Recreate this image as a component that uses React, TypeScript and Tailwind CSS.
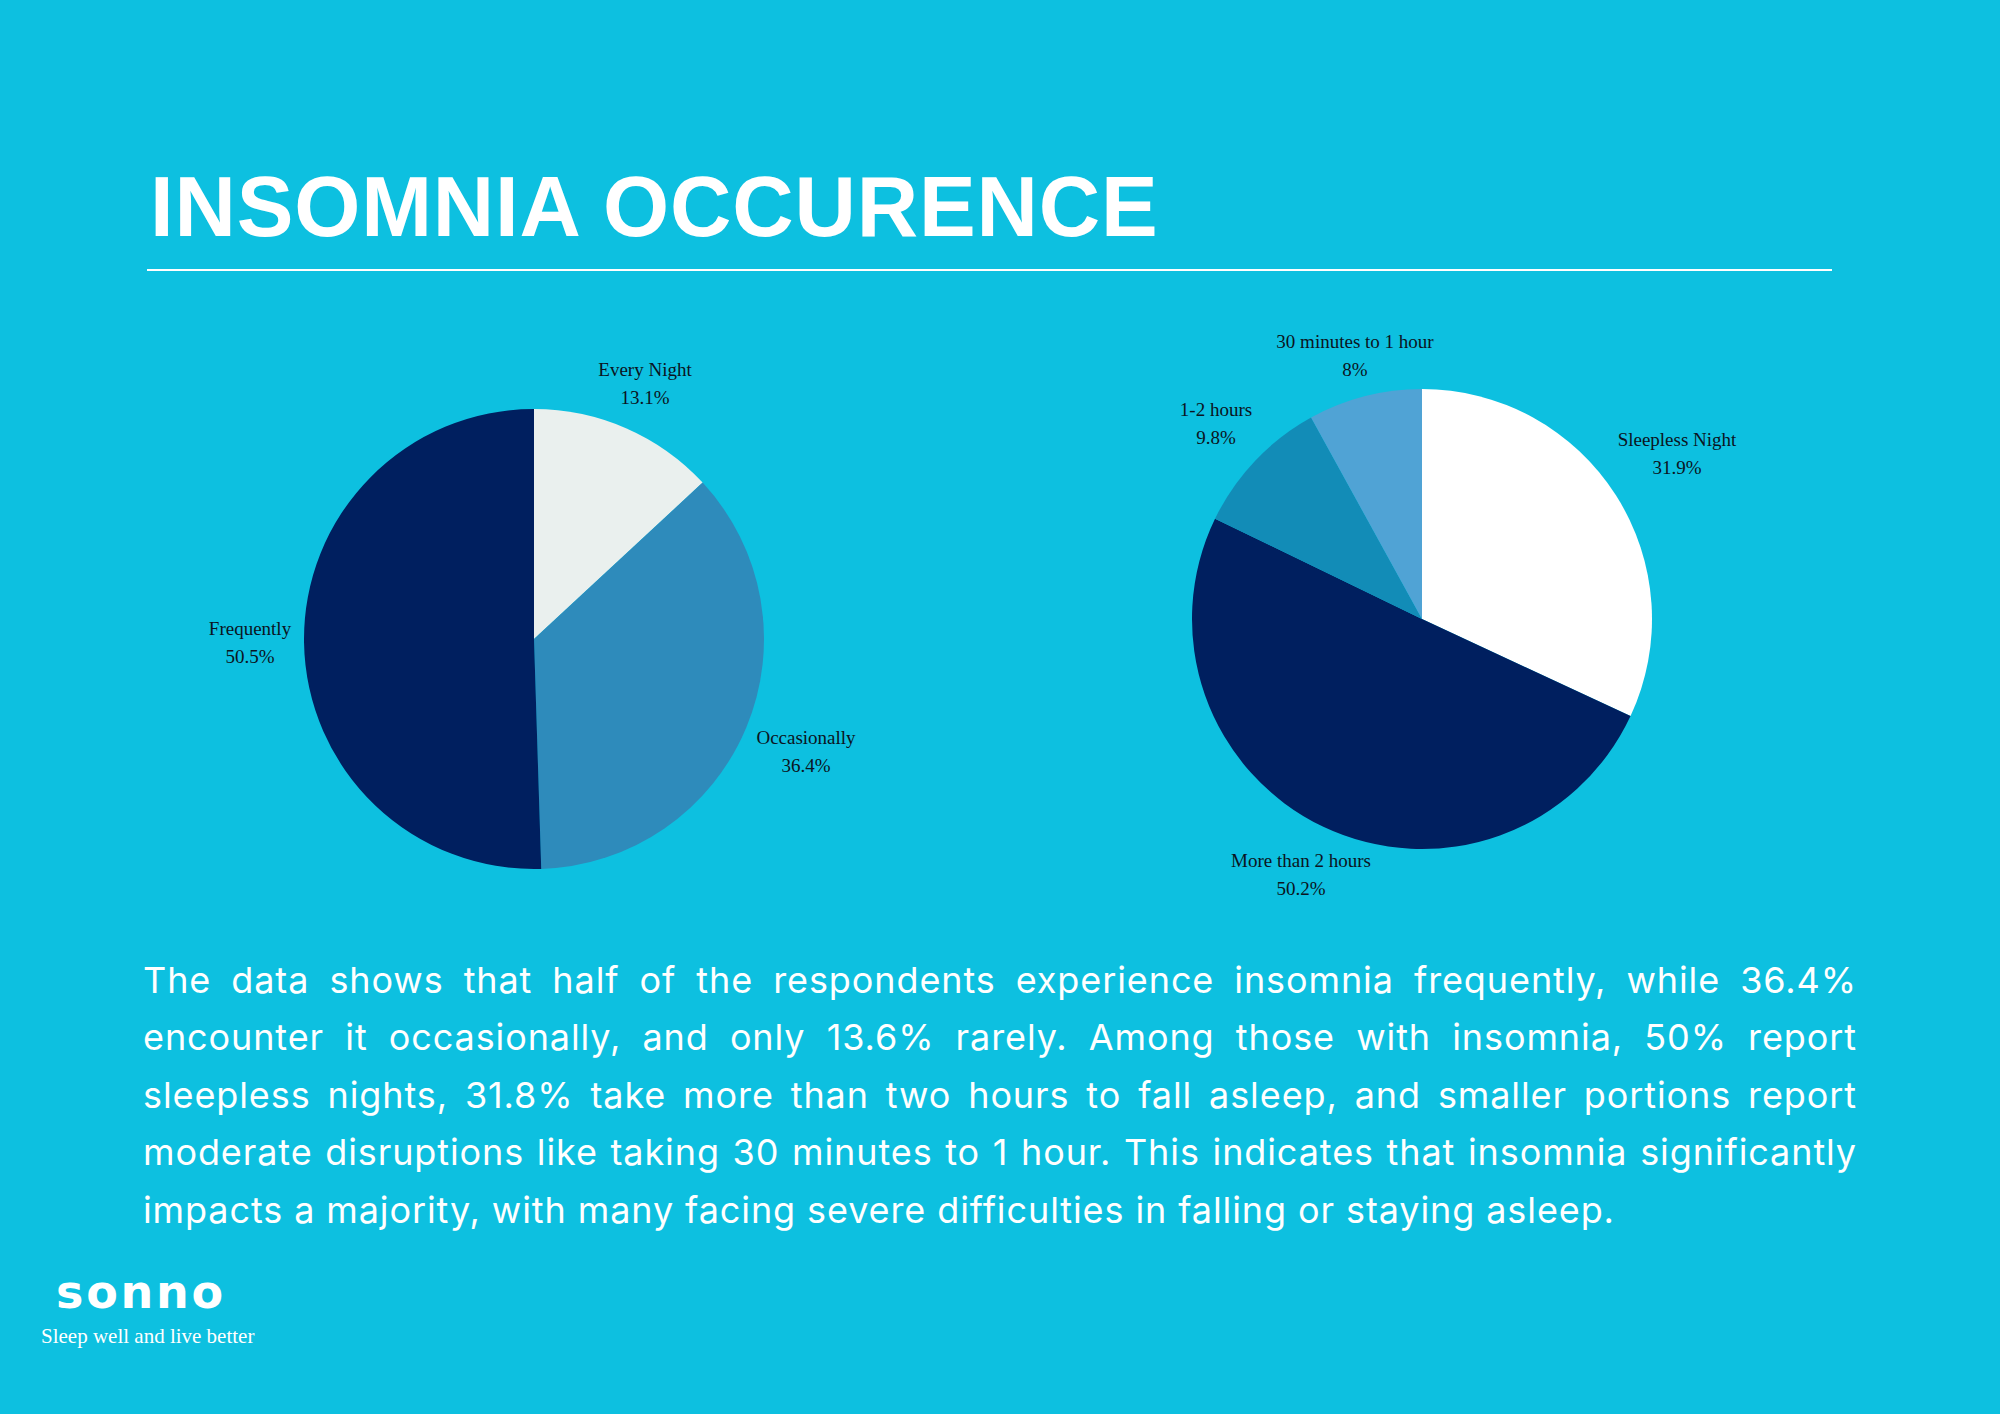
type Slice = { label: string; value: number; color: string; lx: number; ly: number };

const occurrence: Slice[] = [
  { label: "Every Night", value: 13.1, color: "#EAF0EE", lx: 645, ly: 101 },
  { label: "Occasionally", value: 36.4, color: "#2E8BBB", lx: 806, ly: 469 },
  { label: "Frequently", value: 50.5, color: "#001F5F", lx: 250, ly: 360 },
];

const duration: Slice[] = [
  { label: "Sleepless Night", value: 31.9, color: "#FFFFFF", lx: 677, ly: 171 },
  { label: "More than 2 hours", value: 50.2, color: "#001F5F", lx: 301, ly: 592 },
  { label: "1-2 hours", value: 9.8, color: "#128CB7", lx: 216, ly: 141 },
  { label: "30 minutes to 1 hour", value: 8, color: "#50A3D5", lx: 355, ly: 73 },
];

const summary = [
  "The data shows that half of the respondents experience insomnia frequently, while 36.4%",
  "encounter it occasionally, and only 13.6% rarely. Among those with insomnia, 50% report",
  "sleepless nights, 31.8% take more than two hours to fall asleep, and smaller portions report",
  "moderate disruptions like taking 30 minutes to 1 hour. This indicates that insomnia significantly",
  "impacts a majority, with many facing severe difficulties in falling or staying asleep.",
];

function point(cx: number, cy: number, r: number, turn: number) {
  const a = turn * Math.PI * 2;
  return [cx + r * Math.sin(a), cy - r * Math.cos(a)];
}

function Pie({ slices, cx, cy, r }: { slices: Slice[]; cx: number; cy: number; r: number }) {
  const total = slices.reduce((s, x) => s + x.value, 0);
  let start = 0;
  return (
    <svg width={1000} height={650} viewBox="0 0 1000 650">
      {slices.map((s) => {
        const end = start + s.value / total;
        const [x1, y1] = point(cx, cy, r, start);
        const [x2, y2] = point(cx, cy, r, end);
        const large = end - start > 0.5 ? 1 : 0;
        start = end;
        return (
          <path
            key={s.label}
            d={`M${cx} ${cy} L${x1} ${y1} A${r} ${r} 0 ${large} 1 ${x2} ${y2} Z`}
            fill={s.color}
          />
        );
      })}
      {slices.map((s) => (
        <text
          key={s.label + "-t"}
          textAnchor="middle"
          fill="#0B1422"
          fontSize={19}
          style={{ fontFamily: '"Liberation Serif", serif' }}
        >
          <tspan x={s.lx} y={s.ly} dominantBaseline="middle">{s.label}</tspan>
          <tspan x={s.lx} y={s.ly + 28} dominantBaseline="middle">{s.value}%</tspan>
        </text>
      ))}
    </svg>
  );
}

export default function App() {
  return (
    <div className="w-[2000px] h-[1414px] overflow-hidden bg-[#0DC0E0] text-white">
      <header className="pt-[164px]">
        <h1 className="pl-[150px] text-[85px] leading-none font-bold tracking-[0.01em] font-['Liberation_Sans',sans-serif]">
          INSOMNIA OCCURENCE
        </h1>
        <div className="ml-[147px] mt-[20px] w-[1685px] h-[2px] bg-white" />
      </header>

      {/* Charts */}
      <section className="grid grid-cols-2">
        <Pie slices={occurrence} cx={534} cy={368} r={230} />
        <Pie slices={duration} cx={422} cy={348} r={230} />
      </section>

      <p className="mt-[31px] ml-[143px] w-[1714px] text-[36px] leading-[57.4px] tracking-[0.025em] font-['Inter',sans-serif]">
        {summary.map((line, i) => (
          <span
            key={i}
            className={
              i < summary.length - 1
                ? "block whitespace-nowrap text-justify [text-align-last:justify]"
                : "block whitespace-nowrap"
            }
          >
            {line}
          </span>
        ))}
      </p>

      {/* Brand */}
      <footer className="mt-[30px] flex flex-col">
        <span className="ml-[56px] text-[46px] leading-none font-bold tracking-[0.06em] font-['DejaVu_Sans',sans-serif]">
          sonno
        </span>
        <span className="ml-[41px] mt-[11px] text-[21px] leading-none font-['Liberation_Serif',serif]">
          Sleep well and live better
        </span>
      </footer>
    </div>
  );
}
